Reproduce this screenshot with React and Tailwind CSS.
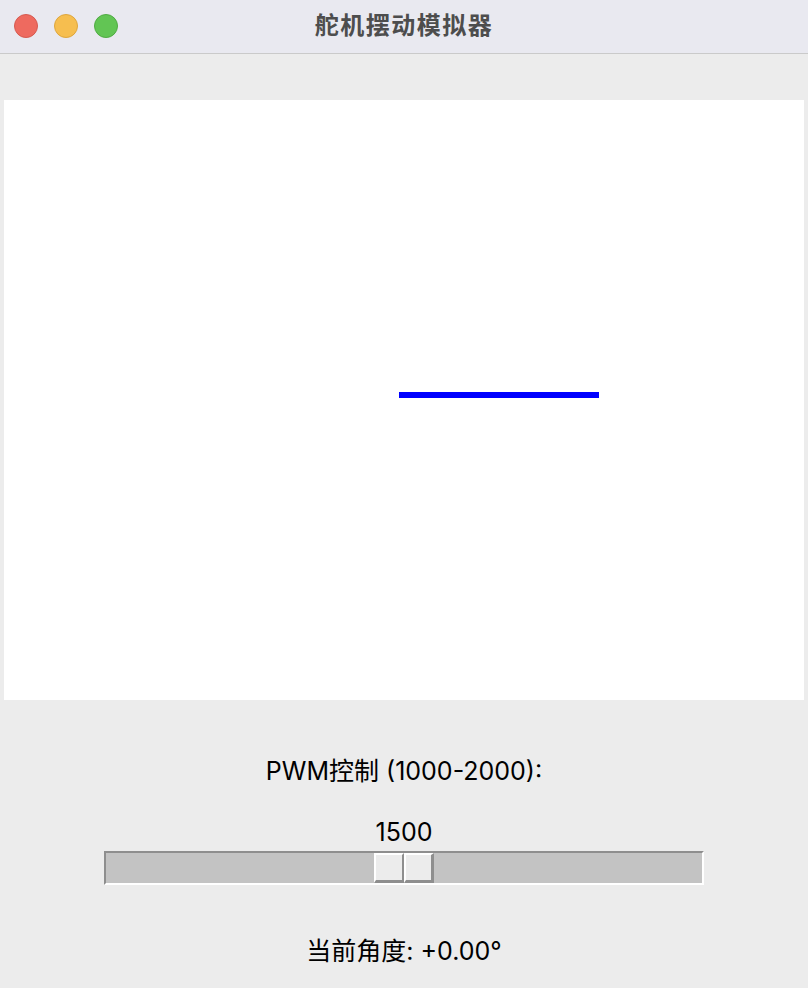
import React, { useState } from 'react';

const font = { fontFamily: 'Inter, "Noto Sans CJK SC", sans-serif' };
const titleFont = { fontFamily: '"Noto Sans CJK SC", sans-serif' };

const TrafficLights = () => (
  <div className="absolute left-[14px] top-[14px] flex gap-4">
    <span className="w-6 h-6 rounded-full bg-[#ee6a5f] border border-[#d65a50]"></span>
    <span className="w-6 h-6 rounded-full bg-[#f6be4f] border border-[#dea63d]"></span>
    <span className="w-6 h-6 rounded-full bg-[#62c554] border border-[#50ab43]"></span>
  </div>
);

const App = () => {
  const [pwm] = useState(1500);
  const angle = ((pwm - 1500) / 500) * 90;

  return (
    <div className="w-[808px] h-[988px] bg-[#ececec] flex flex-col overflow-hidden" style={font}>
      {/* Title bar */}
      <div className="relative h-[54px] bg-[#e9e9f0] border-b border-[#cacaca] flex items-center justify-center pb-[5px]">
        <TrafficLights />
        <span className="text-[24px] font-bold text-[#4d4d4d] tracking-[1.5px]" style={titleFont}>舵机摆动模拟器</span>
      </div>

      {/* Canvas */}
      <div className="mt-[46px] mx-[4px] h-[600px] bg-white">
        <svg width="800" height="600" viewBox="0 0 800 600">
          <line x1="395" y1="295" x2="595" y2="295" stroke="#0000ff" strokeWidth="6" />
        </svg>
      </div>

      {/* Controls */}
      <div className="flex flex-col items-center">
        <div className="mt-[57px] h-[28px] leading-[28px] text-[25px] text-black">PWM控制 (1000-2000):</div>
        <div className="mt-[33px] h-[28px] leading-[28px] text-[25px] text-black">{pwm}</div>
        <div className="mt-[5px] w-[600px] h-[34px] bg-[#c3c3c3] border-t-2 border-l-2 border-[#8e8e8e] border-b-2 border-r-2 border-b-white border-r-white flex justify-center">
          <div className="flex h-[30px]">
            <div className="w-[30px] h-[30px] bg-[#ececec] border-t-2 border-l-2 border-white border-b-[3px] border-r-2 border-b-[#8e8e8e] border-r-[#8e8e8e]"></div>
            <div className="w-[30px] h-[30px] bg-[#ececec] border-t-2 border-l-2 border-white border-b-[3px] border-r-[3px] border-b-[#8e8e8e] border-r-[#8e8e8e]"></div>
          </div>
        </div>
        <div className="mt-[52px] h-[28px] leading-[28px] text-[25px] text-black">
          当前角度: {angle >= 0 ? '+' : ''}{angle.toFixed(2)}°
        </div>
      </div>
    </div>
  );
};

export default App;
